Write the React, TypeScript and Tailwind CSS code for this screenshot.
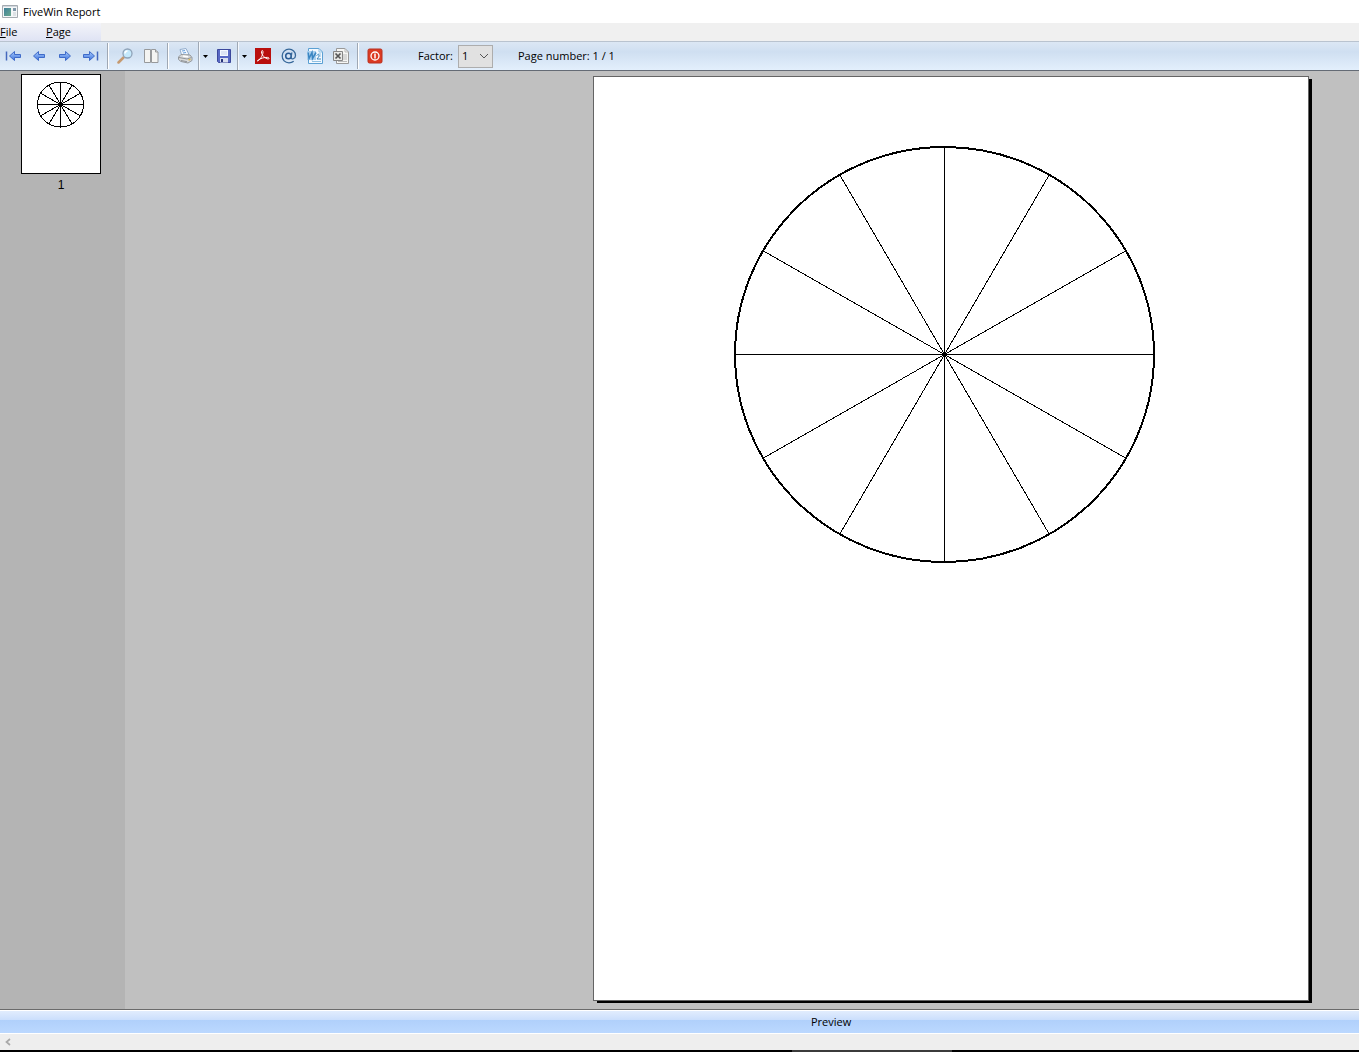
import React from "react";

type IconProps = { children: React.ReactNode; label: string };

function ToolButton({ children, label }: IconProps) {
  return (
    <button type="button" aria-label={label} title={label} className="flex h-7 w-[26px] shrink-0 items-center justify-center">
      <svg width="16" height="16" viewBox="0 0 16 16" aria-hidden="true">
        {children}
      </svg>
    </button>
  );
}

function DropButton({ label }: { label: string }) {
  return (
    <button type="button" aria-label={label} className="flex h-7 w-[13px] shrink-0 items-center justify-center border-l border-[#9fa8b4] shadow-[inset_1px_0_0_#f4f8fd]">
      <svg width="5" height="3" viewBox="0 0 5 3" aria-hidden="true">
        <path d="M0 0h5L2.500 3z" fill="#000" />
      </svg>
    </button>
  );
}

function Separator() {
  return (
    <div className="flex h-[26px] w-2 shrink-0 justify-center" role="separator">
      <div className="w-px bg-[#9fa8b4]" />
      <div className="w-px bg-white" />
    </div>
  );
}

function ArrowIcon({ left, bar }: { left?: boolean; bar?: boolean }) {
  return (
    <g transform={left ? "translate(16 0) scale(-1 1)" : undefined}>
      <path
        d={bar ? "M.5 6.500h6v-3L11.500 8l-5 4.500v-3h-6z" : "M2.500 6.500h6v-3l5 4.500-5 4.500v-3h-6z"}
        fill="url(#blueArrow)"
        stroke="#3f6bc9"
        strokeWidth="1"
        strokeLinejoin="round"
      />
      {bar && <path d="M14.500 3.500v9" stroke="#4468bd" strokeWidth="1.500" />}
    </g>
  );
}

const spokes = Array.from({ length: 12 }, (_, i) => (i * Math.PI) / 6);

function Wheel({ rx, ry, cx, cy, stroke }: { rx: number; ry: number; cx: number; cy: number; stroke: number }) {
  return (
    <g stroke="#000" fill="none" shapeRendering="crispEdges">
      <ellipse cx={cx} cy={cy} rx={rx} ry={ry} strokeWidth={stroke} />
      {spokes.map((a) => (
        <line key={a} x1={cx} y1={cy} x2={cx + rx * Math.cos(a)} y2={cy + ry * Math.sin(a)} strokeWidth="1" />
      ))}
    </g>
  );
}

export default function App() {
  return (
    <div className="flex min-h-screen flex-col bg-[#c0c0c0] font-['Open_Sans','Noto_Sans',sans-serif] text-[11px] leading-4 text-black">
      <header className="flex h-[23px] items-center bg-white pl-0.5">
        <svg width="16" height="14" viewBox="0 0 16 14" aria-hidden="true">
          <defs>
            <linearGradient id="blueArrow" x1="0" y1="0" x2="0" y2="1">
              <stop offset="0" stopColor="#a9cbfb" />
              <stop offset="1" stopColor="#3c72de" />
            </linearGradient>
            <linearGradient id="appPane" x1="0" y1="0" x2="1" y2="1">
              <stop offset="0" stopColor="#3f7f98" />
              <stop offset="1" stopColor="#6aa98f" />
            </linearGradient>
          </defs>
          <path d="M.5.500h15v12H.5z" fill="#f5f7f8" stroke="#a5abb1" />
          <path d="M1 1h14v1H1z" fill="#d0d7dd" />
          <path d="M2 3h7v8H2z" fill="url(#appPane)" />
          <path d="M11 3h3v3h-3z" fill="#8097aa" />
          <path d="M11 7h3v4h-3z" fill="#dde2e5" />
        </svg>
        <h1 className="ml-[5px]">FiveWin Report</h1>
      </header>

      <nav className="flex h-[18px] bg-[#f0f0f0]">
        <div className="flex w-[101px] bg-linear-to-b from-[#f3f4f9] to-[#dfe3f4]">
          <button type="button" className="w-[46px] text-left"><u>F</u>ile</button>
          <button type="button" className="text-left"><u>P</u>age</button>
        </div>
      </nav>

      <div role="toolbar" className="flex h-[30px] items-center border-t border-b border-t-[#b9c3cf] border-b-[#646b75] bg-linear-to-b from-[#dce7f4] via-[#cfdff1] via-35% to-[#e3effc]">
        <ToolButton label="First page"><ArrowIcon left bar /></ToolButton>
        <ToolButton label="Previous page"><ArrowIcon left /></ToolButton>
        <ToolButton label="Next page"><ArrowIcon /></ToolButton>
        <ToolButton label="Last page"><ArrowIcon bar /></ToolButton>
        <Separator />
        <ToolButton label="Zoom">
          <path d="M1.500 14.500l5-5" stroke="#c69a70" strokeWidth="2.500" strokeLinecap="round" />
          <circle cx="10.500" cy="5.500" r="4.500" fill="#c5e9fc" stroke="#8fa3b8" strokeWidth="1.300" />
          <path d="M8 5.500a2.500 2.500 0 0 1 2.500-2.500" stroke="#fff" strokeWidth="1.500" fill="none" />
        </ToolButton>
        <ToolButton label="Two pages">
          <path d="M1.500 1.500h6v13h-6zM8.500 1.500h4l2.500 2.500v10.500H8.500z" fill="#f4f4f2" stroke="#97999b" />
          <path d="M12.500 1.500V4H15" fill="#ddd" stroke="#97999b" />
        </ToolButton>
        <Separator />
        <ToolButton label="Print">
          <path d="M3 1.500l6-1 3 6-7 2z" fill="#eef6ff" stroke="#93adcc" />
          <path d="M5 3l3-.5M6 5l3-.5" stroke="#6ba0dc" />
          <path d="M1.500 9L4 6.500l9 .5 2 2.500v3L11 15l-7-1.500-2.500-2z" fill="#d9dadb" stroke="#94989c" />
          <path d="M2 9.500l8 1.500 4.500-1.500M4 12.500l6 1.200" stroke="#909498" fill="none" />
          <path d="M6 8l5 .8" stroke="#fff" strokeWidth="1.500" />
          <path d="M11.500 12l2-.8" stroke="#d6b64e" strokeWidth="1.500" />
        </ToolButton>
        <DropButton label="Print options" />
        <ToolButton label="Save">
          <path d="M1.500 1.500h13v13h-12l-1-1z" fill="#5868c4" stroke="#3c489c" />
          <path d="M4 2h8v6H4z" fill="#f5f8ff" />
          <path d="M5 4h6M5 6h6" stroke="#c5d0ea" />
          <path d="M4 10h8v4.500H4z" fill="#d8deef" />
          <path d="M5 11h2v3H5z" fill="#273378" />
        </ToolButton>
        <DropButton label="Save options" />
        <ToolButton label="Export as PDF">
          <path d="M0 0h16v16H0z" fill="#b90f0d" />
          <path d="M2.500 13c2-.3 5.500-5.500 5.500-9 0-2-1.500-2-1.500 0 0 3 3.500 6.500 6.500 7 1.500 0 1.500-1.500-.5-1.600-3-.2-7 1-9 2.400-1 .7-1.500 1.200-1 1.200z" fill="none" stroke="#fff" />
        </ToolButton>
        <ToolButton label="Send by e-mail">
          <circle cx="7.500" cy="8" r="2.800" fill="none" stroke="#285a94" strokeWidth="1.500" />
          <path d="M10.800 4.500l-.7 5c0 2.500 4.400 1.500 4.400-2 0-3.700-2.800-6.300-6.500-6.300S1.200 4 1.200 8s2.800 6.800 6.800 6.800c2 0 3.500-.6 4.700-1.500" fill="none" stroke="#366799" strokeWidth="1.300" />
        </ToolButton>
        <ToolButton label="Export to Word">
          <path d="M1.500.500H12L15.500 4v11.500h-14z" fill="#f3f9ff" stroke="#5ba0d3" />
          <path d="M12 .500V4h3.500M11 6h3M12 8h2M5 13.500h9" fill="none" stroke="#8fc0e2" />
          <path d="M0 3h9v9H0z" fill="#a9cfee" />
          <path d="M1.200 4.500L2 10.500l3-6 .5 6 3.500-6" fill="none" stroke="#3a86c2" strokeWidth="1.500" />
          <path d="M9.500 7.500c3-2.500 3.500.5.500 3.500h4" fill="none" stroke="#3c87bd" />
        </ToolButton>
        <ToolButton label="Export to Excel">
          <path d="M3.500.500H12L15.500 4v11.500h-12z" fill="#f6f6f4" stroke="#999" />
          <path d="M12 .500V4h3.500M10 7h4M10 9h4M10 11h4M5 13.500h9" fill="none" stroke="#bbb" />
          <path d="M.5 3.500h9v9h-9z" fill="#e8e8e6" stroke="#858585" />
          <path d="M2.500 5.500l5 5M7.500 5.500l-5 5" stroke="#555" strokeWidth="1.700" />
        </ToolButton>
        <Separator />
        <ToolButton label="Exit">
          <rect x="1" y="1" width="14" height="14" rx="1.500" fill="#dc3a22" stroke="#b83020" />
          <circle cx="8" cy="8" r="4" fill="none" stroke="#fff" strokeWidth="1.300" />
          <path d="M8 5.500v5" stroke="#fff" strokeWidth="1.500" />
        </ToolButton>

        <label htmlFor="factor" className="ml-[30px] w-10 whitespace-nowrap">Factor:</label>
        <div className="relative h-[23px] w-[35px]">
          <select id="factor" defaultValue="1" className="h-full w-full appearance-none border border-[#adadad] bg-[#e1e1e1] pl-[3px]">
            <option>1</option>
            <option>2</option>
            <option>3</option>
          </select>
          <svg className="pointer-events-none absolute top-2 right-1" width="10" height="7" viewBox="0 0 10 7" aria-hidden="true">
            <path d="M1 1l4 4 4-4" fill="none" stroke="#555" />
          </svg>
        </div>
        <span className="ml-[25px] whitespace-nowrap">Page number: 1 / 1</span>
      </div>

      <main className="flex flex-1">
        <aside className="flex w-[125px] shrink-0 flex-col bg-[#b4b4b4] pt-[3px] pl-[21px]">
          <button type="button" className="flex w-20 flex-col items-center gap-[3px]">
            <svg className="border border-black bg-white" width="80" height="100" viewBox="0 0 78 98" role="img" aria-label="Page 1">
              <Wheel cx={38.5} cy={29.5} rx={23} ry={22.5} stroke={1} />
            </svg>
            <span className="font-['Liberation_Sans',sans-serif] text-[12px]">1</span>
          </button>
        </aside>
        <section className="flex flex-1 items-start pt-[5px] pr-[50px] pb-2">
          <div className="relative ml-auto w-[716px]">
            <div className="absolute top-[3px] -right-[3px] -bottom-0.5 left-1 bg-black" />
            <div className="relative aspect-[716/925] border border-[#646464] bg-white">
              <svg className="block h-full w-full" viewBox="0 0 714 923" role="img" aria-label="Circle with twelve sectors">
                <Wheel cx={350.5} cy={277.5} rx={209.5} ry={207.5} stroke={2} />
              </svg>
            </div>
          </div>
        </section>
      </main>

      <footer>
        <div className="flex h-[25px] items-center border-t border-b border-t-[#6b6b6b] border-b-white bg-[linear-gradient(to_bottom,#e4eefd_0%,#cbdffc_42%,#b0d0fb_43%,#bbd8ff_100%)] pl-[811px] shadow-[inset_0_1px_0_white]">
          Preview
        </div>
        <div className="flex h-4 items-center bg-[#eeeeee] pl-[5px]">
          <button type="button" aria-label="Scroll left">
            <svg width="6" height="8" viewBox="0 0 6 8" aria-hidden="true">
              <path d="M5 1L1.500 4 5 7" fill="none" stroke="#a8a8a8" strokeWidth="1.700" />
            </svg>
          </button>
        </div>
        <div className="h-0.5 bg-black pl-[792px]">
          <div className="h-full w-40 bg-[#3b3b3b]" />
        </div>
      </footer>
    </div>
  );
}
